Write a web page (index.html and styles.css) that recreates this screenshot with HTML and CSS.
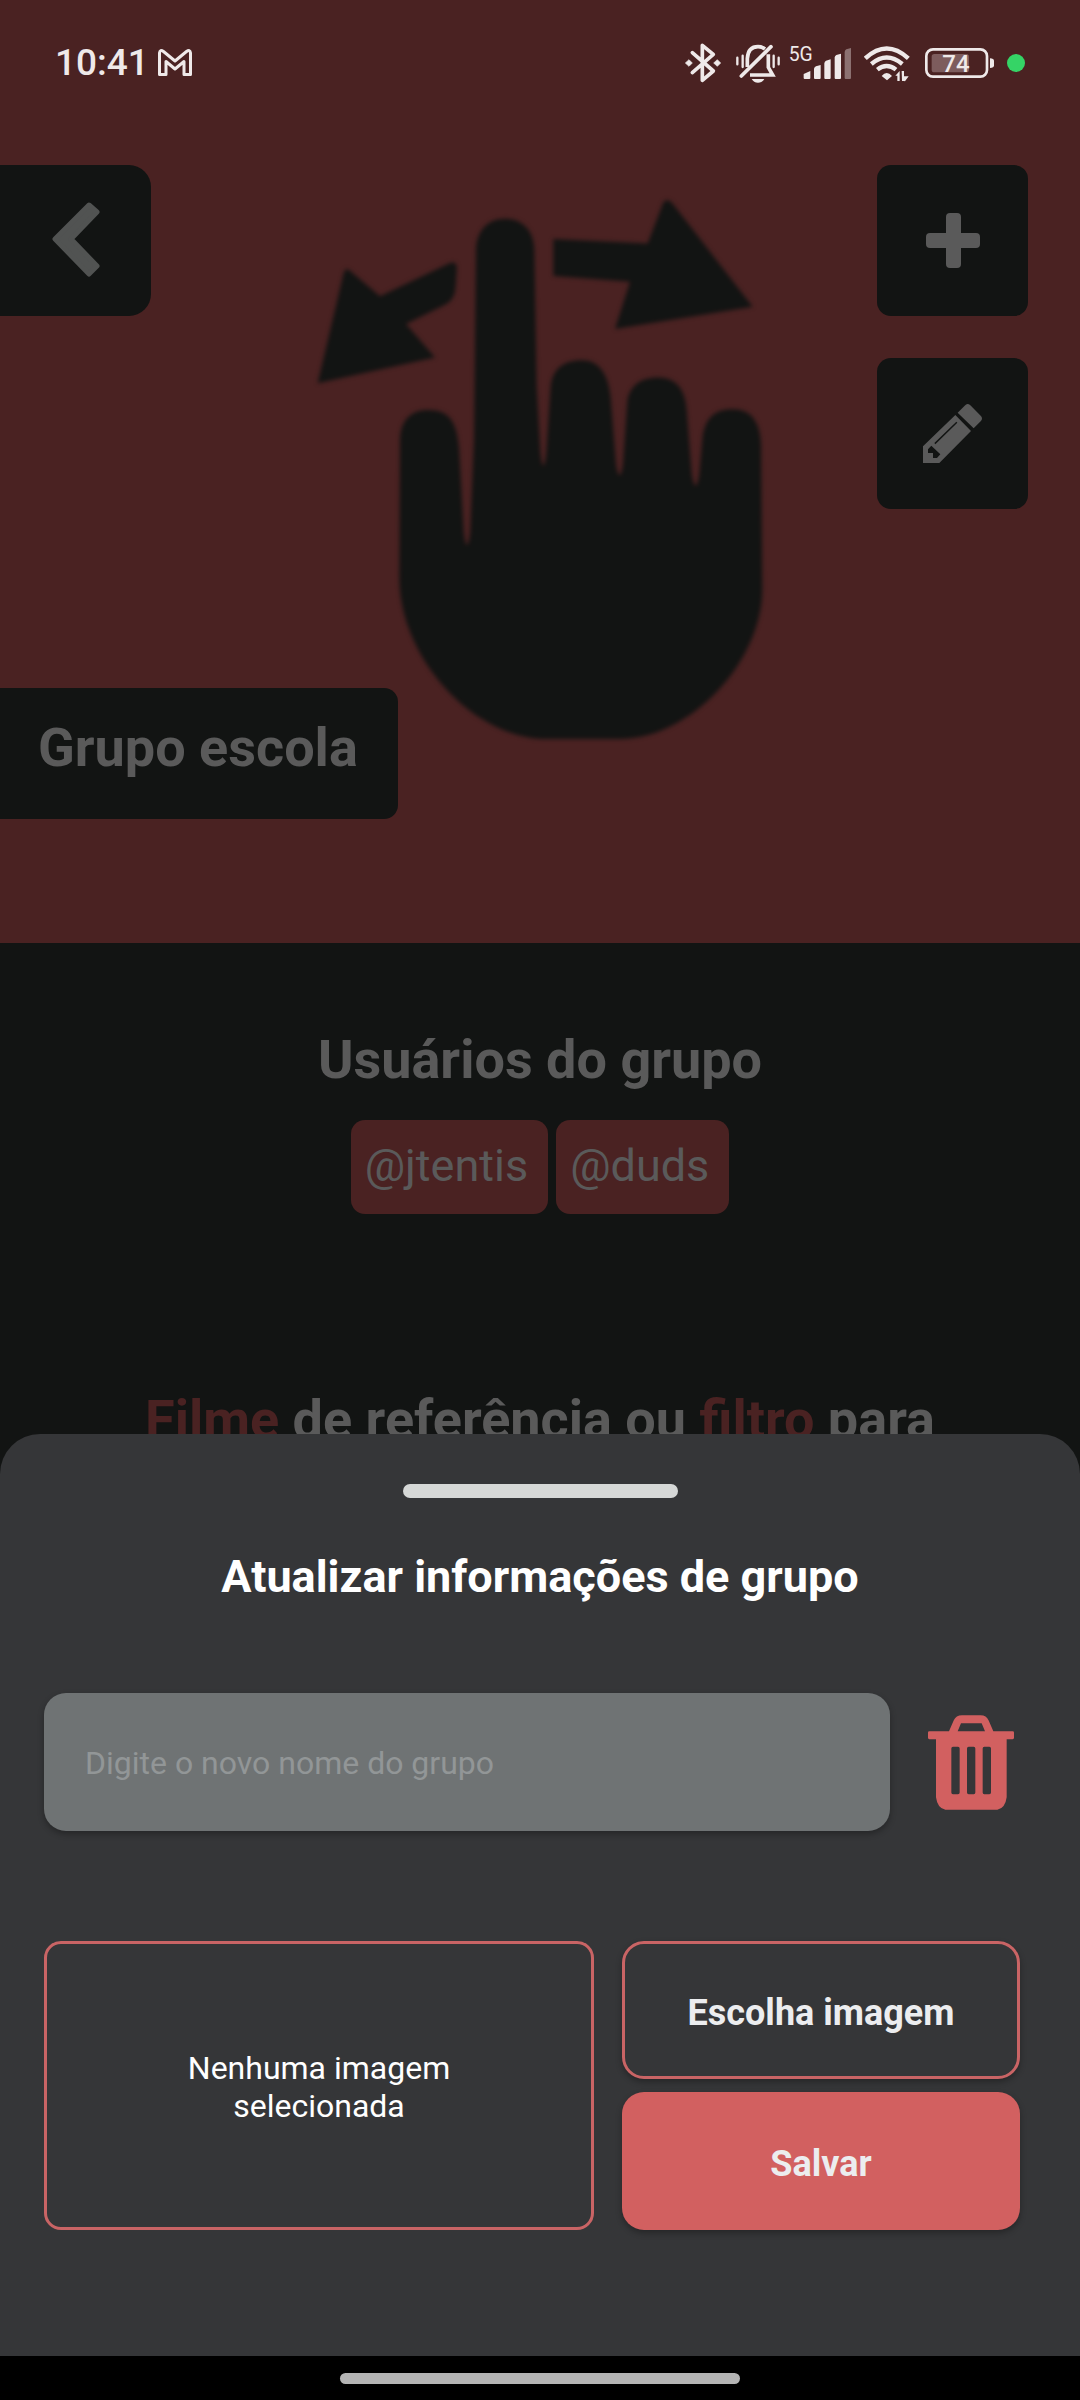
FILE: index.html
```html
<!DOCTYPE html>
<html lang="pt-BR">
<head>
<meta charset="utf-8">
<meta name="viewport" content="width=device-width, initial-scale=1">
<title>Grupo escola</title>
<link rel="stylesheet" href="styles.css">
</head>
<body>
<main class="page">
  <section class="hero">
    <svg class="hero-art" viewBox="0 0 1080 943" aria-hidden="true">
      <g transform="translate(280 172) scale(.33333 .38265)">
        <path d="M360 700C362 650 390 622 445 622C505 622 530 650 537 720L551 940Q561 1010 571 940L582 700L588 200C592 150 625 122 675 122C725 122 760 150 763 200L770 560L781 735Q790 800 799 735L812 560C818 515 850 492 905 492C955 492 985 525 992 590L1008 765Q1019 820 1029 765L1042 600C1048 560 1080 537 1135 537C1185 537 1215 565 1220 620L1235 790Q1247 850 1258 790L1268 690C1278 640 1305 620 1360 620C1410 620 1440 650 1443 710L1447 1090C1447 1280 1230 1482 1020 1482H800C580 1482 358 1270 358 1060Z"/>
        <path d="M190 268Q196 244 215 262L300 325L510 238Q534 230 530 260L527 300Q525 335 495 347L378 397L465 485L113 552Z"/>
        <path d="M820 175L1103 187L1150 80Q1163 65 1180 85L1418 352L1005 410L1050 287L820 272Z"/>
      </g>
    </svg>
    <header class="status-bar">
      <div class="status-left">
        <span class="clock">10:41</span>
        <svg width="34" height="28" viewBox="0 0 34 28" fill="none" stroke="#efe9e9" stroke-width="3" stroke-linejoin="round" aria-hidden="true">
          <path d="M1.5 25V4Q2 0 5.500 2.500L17 12L28.500 2.500Q32 0 32.500 4V25.500H26V12.500L17 20L8 12.500V25.500H1.500Z"/>
        </svg>
      </div>
      <div class="status-icons">
        <svg width="42" height="45" viewBox="75 60 126 135" aria-hidden="true">
          <path d="M97 98L160 153L127 181V76L160 103L97 158" fill="none" stroke="#efe9e9" stroke-width="11" stroke-linejoin="round" stroke-linecap="round"/>
          <path d="M87 119L97 129L87 139L76 129ZM172 119L182 129L172 139L161 129Z" fill="#efe9e9" stroke="#efe9e9" stroke-width="2" stroke-linejoin="round"/>
        </svg>
        <svg width="44" height="45" viewBox="228 60 132 135" fill="none" stroke="#efe9e9" aria-hidden="true">
          <path d="M262 141V116Q264 80 294 80Q306 80 315 87M325 103V142L338 165H270" stroke-width="11"/>
          <path d="M244 168L333 80" stroke-width="11" stroke-linecap="round"/>
          <path d="M232 113V133M248 107V141M341 107V141M356 113V133" stroke-width="7" stroke-linecap="round"/>
          <path d="M275 177H313Q306 188 294 188Q281 188 275 177Z" fill="#efe9e9" stroke="none"/>
        </svg>
        <svg width="66" height="45" viewBox="387 60 198 135" fill="#efe9e9" aria-hidden="true">
          <text class="net-label" x="386" y="123">5G</text>
          <path d="M431 162L451 153V174Q451 177 448 177H434Q431 177 431 174ZM462 146Q463 141 468 139L482 135V174Q482 177 479 177H465Q462 177 462 174ZM493 130Q494 124 498 122L512 118V174Q512 177 509 177H496Q493 177 493 174ZM524 112Q525 107 529 105L543 101V174Q543 177 540 177H527Q524 177 524 174Z"/>
          <path d="M554 96Q555 90 559 88L573 84V174Q573 177 570 177H557Q554 177 554 174Z" opacity=".4"/>
        </svg>
        <svg width="52" height="45" viewBox="612 60 156 135" aria-hidden="true">
          <path d="M616 115Q680 56 745 115M634 132Q680 93 727 132M652 149Q680 127 708 149" fill="none" stroke="#efe9e9" stroke-width="13"/>
          <path d="M665 168Q680 150 696 168L681 181ZM706 167L719 153V183H712V167ZM725 153H732V183L726 183ZM732 183V169H746L735 184Z" fill="#efe9e9"/>
        </svg>
        <svg width="73" height="45" viewBox="795 60 219 135" aria-hidden="true">
          <rect x="799" y="88" width="182" height="82" rx="20" fill="none" stroke="#efe9e9" stroke-width="8"/>
          <path d="M990 115Q1002 115 1002 123V136Q1002 144 990 144Z" fill="#efe9e9"/>
          <rect x="815" y="102" width="112" height="55" rx="8" fill="#7d5c5d"/>
          <text class="battery-label" x="888" y="156" text-anchor="middle">74</text>
        </svg>
        <span class="privacy-dot"></span>
      </div>
    </header>
    <div class="hero-actions">
      <button class="tile tile-back" type="button" aria-label="Voltar">
        <svg width="48" height="76" viewBox="53 200 48 76" aria-hidden="true">
          <path d="M56 238L90 204L98 211L72 238L98 265L90 273Z" fill="#515352" stroke="#515352" stroke-width="5" stroke-linejoin="round"/>
        </svg>
      </button>
      <div class="tile-stack">
        <button class="tile" type="button" aria-label="Adicionar">
          <svg width="54" height="55" viewBox="0 0 54 55" fill="#5a5a5a" aria-hidden="true">
            <rect x="20" width="15" height="55" rx="4"/><rect y="20" width="54" height="15" rx="4"/>
          </svg>
        </button>
        <button class="tile" type="button" aria-label="Editar">
          <svg width="59" height="59" viewBox="249 795 177 177" fill="#5a5a5a" aria-hidden="true">
            <path d="M353 821L374 800Q382 791 391 799L422 830Q430 838 422 847L401 868Z"/>
            <path fill-rule="evenodd" d="M346 828L393 876L298 972H249V922ZM274 920L264 931V942H279V957H291L301 946ZM349 848L283 912L286 916L352 851Z"/>
          </svg>
        </button>
      </div>
    </div>
    <h1 class="group-name">Grupo escola</h1>
  </section>
  <section class="members">
    <h2 class="heading">Usuários do grupo</h2>
    <ul class="chips">
      <li class="chip">@jtentis</li>
      <li class="chip">@duds</li>
    </ul>
  </section>
  <h2 class="heading"><span class="accent">Filme</span> de referência ou <span class="accent">filtro</span> para</h2>
</main>

<div class="overlay">
  <section class="sheet" role="dialog" aria-labelledby="sheet-title">
    <div class="grabber"></div>
    <h2 class="sheet-title" id="sheet-title">Atualizar informações de grupo</h2>
    <form class="form">
      <div class="name-row">
        <input class="name-input" type="text" aria-label="Nome do grupo" placeholder="Digite o novo nome do grupo">
        <button class="delete" type="button" aria-label="Excluir grupo">
          <svg width="86" height="95" viewBox="0 0 258 284" fill="#d26060" aria-hidden="true">
            <path fill-rule="evenodd" d="M63 48L77 16Q84 0 102 0H158Q175 0 182 16L196 48H254Q258 48 258 52V68Q258 72 254 72H236V246Q232 278 208 284H52Q28 278 24 246V72H4Q0 72 0 68V52Q0 48 4 48ZM89 48H171L161 24H99ZM75 95Q70 95 70 100V232Q70 237 75 237H90Q95 237 95 232V100Q95 95 90 95ZM122 95Q117 95 117 100V232Q117 237 122 237H137Q142 237 142 232V100Q142 95 137 95ZM169 95Q164 95 164 100V232Q164 237 169 237H184Q189 237 189 232V100Q189 95 184 95Z"/>
          </svg>
        </button>
      </div>
      <div class="image-row">
        <div class="preview"><p class="preview-text">Nenhuma imagem selecionada</p></div>
        <div class="buttons">
          <button class="btn btn-outline" type="button">Escolha imagem</button>
          <button class="btn btn-solid" type="submit">Salvar</button>
        </div>
      </div>
    </form>
  </section>
  <div class="nav-bar"><span class="nav-pill"></span></div>
</div>
</body>
</html>
```
FILE: styles.css
```css
* {
  box-sizing: border-box;
}

body {
  margin: 0;
  background: #121413;
  color: #5a5a5a;
  font-family: Roboto, "Liberation Sans", sans-serif;
}

h1, h2, p, ul {
  margin: 0;
  padding: 0;
}

button {
  padding: 0;
  border: 0;
  font: inherit;
  cursor: pointer;
}

svg {
  display: block;
}

.hero {
  position: relative;
  padding-bottom: 124px;
  background: #4a2222;
}

.hero-art {
  position: absolute;
  inset: 0;
  width: 100%;
  height: 100%;
  fill: #121413;
  filter: blur(2px);
}

.status-bar,
.hero-actions,
.group-name {
  position: relative;
}

.status-bar {
  display: flex;
  justify-content: space-between;
  align-items: center;
  height: 125px;
  padding: 0 55px;
}

.status-left {
  display: flex;
  align-items: center;
  gap: 9px;
}

.clock {
  color: #efe9e9;
  font-size: 37px;
  font-weight: 500;
  line-height: 44px;
}

.status-icons {
  display: flex;
  align-items: center;
  gap: 9px;
}

.net-label {
  font-size: 58px;
}

.battery-label {
  fill: #efe9e9;
  font-size: 72px;
  font-weight: 500;
}

.privacy-dot {
  width: 18px;
  height: 18px;
  border-radius: 50%;
  background: #35d466;
}

.hero-actions {
  display: flex;
  justify-content: space-between;
  align-items: flex-start;
  padding: 40px 52px 0 0;
}

.tile {
  display: flex;
  align-items: center;
  justify-content: center;
  width: 151px;
  height: 151px;
  border-radius: 14px;
  background: #121413;
}

.tile-back {
  padding-bottom: 4px;
  border-radius: 0 22px 22px 0;
}

.tile-stack {
  display: flex;
  flex-direction: column;
  gap: 42px;
}

.group-name {
  width: fit-content;
  margin-top: 179px;
  padding: 28px 40px 39px 38px;
  border-radius: 0 14px 14px 0;
  background: #121413;
  font-size: 54px;
  font-weight: 700;
  line-height: 64px;
}

.members {
  padding: 85px 0 174px;
}

.heading {
  font-size: 54px;
  font-weight: 700;
  line-height: 64px;
  text-align: center;
}

.accent {
  color: #4a2222;
}

.chips {
  display: flex;
  justify-content: center;
  gap: 8px;
  margin-top: 28px;
  list-style: none;
}

.chip {
  padding: 20px 20px 22px 14px;
  border-radius: 14px;
  background: #4a2222;
  font-size: 45px;
  line-height: 52px;
}

.overlay {
  position: fixed;
  right: 0;
  bottom: 0;
  left: 0;
}

.sheet {
  padding: 50px 0 126px;
  border-radius: 40px 40px 0 0;
  background: #353638;
}

.grabber {
  width: 275px;
  height: 14px;
  margin: 0 auto;
  border-radius: 7px;
  background: #d6d8d7;
}

.sheet-title {
  margin-top: 53px;
  color: #fff;
  font-size: 45px;
  font-weight: 700;
  line-height: 52px;
  text-align: center;
}

.form {
  display: flex;
  flex-direction: column;
  gap: 110px;
  margin-top: 90px;
  padding: 0 60px 0 44px;
}

.name-row {
  display: flex;
  align-items: center;
  gap: 32px;
}

.name-input {
  flex: 1;
  min-width: 0;
  height: 138px;
  padding: 2px 41px 0;
  border: 0;
  border-radius: 22px;
  background: #6f7374;
  box-shadow: 0 3px 6px rgba(0, 0, 0, .3);
  color: #fff;
  font: inherit;
  font-size: 32px;
}

.name-input::placeholder {
  color: #929697;
  opacity: 1;
}

.delete {
  display: flex;
  justify-content: center;
  width: 98px;
  background: none;
}

.image-row {
  display: grid;
  grid-template-columns: 550fr 398fr;
  gap: 28px;
}

.preview {
  display: flex;
  align-items: center;
  justify-content: center;
  padding-top: 2px;
  border: 3px solid #c96465;
  border-radius: 17px;
}

.preview-text {
  max-width: 300px;
  color: #fff;
  font-size: 32px;
  line-height: 38px;
  text-align: center;
}

.buttons {
  display: flex;
  flex-direction: column;
  gap: 13px;
}

.btn {
  height: 138px;
  padding-top: 6px;
  border-radius: 22px;
  box-shadow: 0 3px 6px rgba(0, 0, 0, .3);
  color: #ecedef;
  font-size: 36px;
  font-weight: 700;
}

.btn-outline {
  border: 3px solid #c96465;
  background: #353638;
}

.btn-solid {
  background: #d26060;
}

.nav-bar {
  display: flex;
  align-items: center;
  justify-content: center;
  height: 44px;
  background: #000;
}

.nav-pill {
  width: 400px;
  height: 11px;
  border-radius: 6px;
  background: #b4b4b4;
}
```
